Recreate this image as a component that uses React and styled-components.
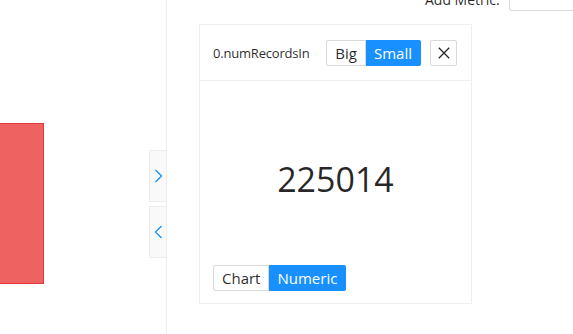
import React, { useState } from "react";
import styled, { createGlobalStyle } from "styled-components";

const GlobalStyle = createGlobalStyle`
  html, body {
    margin: 0;
    padding: 0;
    background: #ffffff;
    overflow: hidden;
  }
  body {
    font-family: "Open Sans", "Noto Sans", "Liberation Sans", sans-serif;
    color: rgba(0, 0, 0, 0.85);
  }
  * { box-sizing: border-box; }
`;

const Page = styled.div`
  display: flex;
  width: 573px;
  height: 334px;
  overflow: hidden;
`;

const LeftPanel = styled.div`
  width: 167px;
  flex: none;
  display: flex;
  border-right: 1px solid #eeeeee;
`;

const ChartArea = styled.div`
  flex: 1;
  padding-top: 123px;
`;

const Bar = styled.div`
  width: 44px;
  height: 161px;
  background: #ef6262;
  border: 1px solid #e23a3a;
  border-left: none;
`;

const Toggles = styled.div`
  display: flex;
  flex-direction: column;
  gap: 4px;
  padding-top: 150px;
`;

const SideToggle = styled.button`
  width: 17px;
  height: 52px;
  padding: 0;
  margin: 0;
  display: flex;
  align-items: center;
  justify-content: center;
  background: #f9f9f9;
  border: 1px solid #eeeeee;
  border-right: none;
  color: #1890ff;
  cursor: pointer;
`;

const RightPanel = styled.div`
  flex: 1;
  display: flex;
  flex-direction: column;
  padding-left: 32px;
  margin-top: -22px;
`;

const Toolbar = styled.div`
  display: flex;
  align-items: flex-end;
  height: 33px;
  padding-left: 226px;
  white-space: nowrap;
`;

const Label = styled.span`
  font-size: 14px;
  line-height: 16px;
  padding-bottom: 3px;
  margin-right: 9px;
  color: rgba(0, 0, 0, 0.85);
`;

const MetricInput = styled.input`
  width: 140px;
  height: 33px;
  flex: none;
  border: 1px solid #d9d9d9;
  border-radius: 2px;
  padding: 0 8px;
  font: inherit;
  background: #fff;
`;

const Card = styled.div`
  margin-top: 13px;
  width: 273px;
  height: 280px;
  border: 1px solid #eeeeee;
  display: flex;
  flex-direction: column;
  background: #fff;
`;

const CardHeader = styled.div`
  height: 56px;
  flex: none;
  display: flex;
  align-items: center;
  padding: 0 14px 0 13px;
  border-bottom: 1px solid #eeeeee;
`;

const Title = styled.div`
  flex: 1;
  font-size: 13px;
  color: rgba(0, 0, 0, 0.85);
  letter-spacing: -0.2px;
`;

const Group = styled.div`
  display: flex;
`;

const SegButton = styled.button`
  height: 26px;
  padding: 0 8px;
  margin: 0;
  font-family: inherit;
  font-size: 15px;
  line-height: 24px;
  border: 1px solid ${(p) => (p.$active ? "#1890ff" : "#d9d9d9")};
  background: ${(p) => (p.$active ? "#1890ff" : "#ffffff")};
  color: ${(p) => (p.$active ? "#ffffff" : "rgba(0, 0, 0, 0.85)")};
  cursor: pointer;
  &:first-child {
    border-radius: 2px 0 0 2px;
  }
  &:last-child {
    border-radius: 0 2px 2px 0;
  }
  & + & {
    border-left: none;
  }
`;

const CloseButton = styled.button`
  width: 27px;
  height: 26px;
  margin-left: 9px;
  padding: 0;
  display: flex;
  align-items: center;
  justify-content: center;
  border: 1px solid #d9d9d9;
  border-radius: 2px;
  background: #fff;
  color: rgba(0, 0, 0, 0.85);
  cursor: pointer;
`;

const CardBody = styled.div`
  flex: 1;
  display: flex;
  flex-direction: column;
  padding: 13px 13px 12px 13px;
`;

const Value = styled.div`
  flex: 1;
  display: flex;
  align-items: center;
  justify-content: center;
  font-size: 34px;
  font-weight: 400;
  color: rgba(0, 0, 0, 0.85);
  padding-bottom: 2px;
`;

const Chevron = ({ dir }) => (
  <svg width="9" height="14" viewBox="0 0 9 14" fill="none">
    {dir === "right" ? (
      <path d="M1.5 1 L7.5 7 L1.5 13" stroke="currentColor" strokeWidth="1.3" />
    ) : (
      <path d="M7.5 1 L1.5 7 L7.5 13" stroke="currentColor" strokeWidth="1.3" />
    )}
  </svg>
);

const CloseIcon = () => (
  <svg width="12" height="12" viewBox="0 0 12 12" fill="none">
    <path d="M0.8 0.8 L11.2 11.2 M11.2 0.8 L0.8 11.2" stroke="currentColor" strokeWidth="1.3" />
  </svg>
);

export default function App() {
  const [size, setSize] = useState("small");
  const [mode, setMode] = useState("numeric");
  return (
    <>
      <GlobalStyle />
      <Page>
        <LeftPanel>
          <ChartArea>
            <Bar />
          </ChartArea>
          <Toggles>
            <SideToggle aria-label="expand">
              <Chevron dir="right" />
            </SideToggle>
            <SideToggle aria-label="collapse">
              <Chevron dir="left" />
            </SideToggle>
          </Toggles>
        </LeftPanel>
        <RightPanel>
          <Toolbar>
            <Label>Add Metric:</Label>
            <MetricInput />
          </Toolbar>
          <Card>
            <CardHeader>
              <Title>0.numRecordsIn</Title>
              <Group>
                <SegButton $active={size === "big"} onClick={() => setSize("big")}>
                  Big
                </SegButton>
                <SegButton $active={size === "small"} onClick={() => setSize("small")}>
                  Small
                </SegButton>
              </Group>
              <CloseButton aria-label="close">
                <CloseIcon />
              </CloseButton>
            </CardHeader>
            <CardBody>
              <Value>225014</Value>
              <Group>
                <SegButton $active={mode === "chart"} onClick={() => setMode("chart")}>
                  Chart
                </SegButton>
                <SegButton $active={mode === "numeric"} onClick={() => setMode("numeric")}>
                  Numeric
                </SegButton>
              </Group>
            </CardBody>
          </Card>
        </RightPanel>
      </Page>
    </>
  );
}
